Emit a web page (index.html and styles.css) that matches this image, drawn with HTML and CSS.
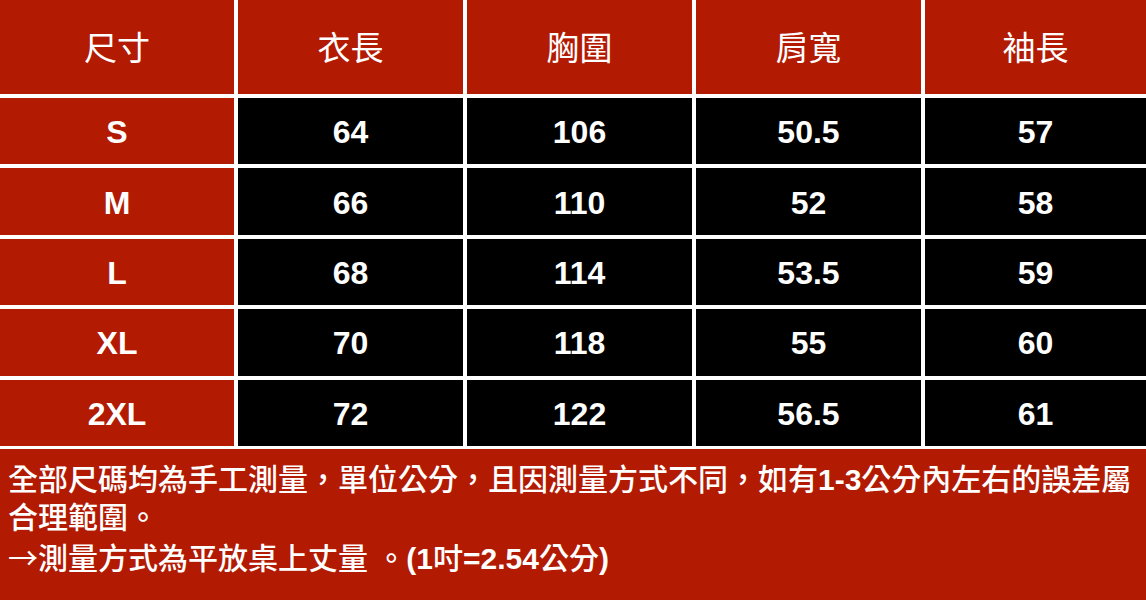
FILE: index.html
```html
<!DOCTYPE html>
<html lang="zh-Hant">
<head>
<meta charset="utf-8">
<title>尺寸表</title>
<link rel="stylesheet" href="styles.css">
</head>
<body>
<div class="sheet">
  <div class="table">
    <div class="cell head">尺寸</div>
    <div class="cell head">衣長</div>
    <div class="cell head">胸圍</div>
    <div class="cell head">肩寬</div>
    <div class="cell head">袖長</div>

    <div class="cell size">S</div>
    <div class="cell val">64</div>
    <div class="cell val">106</div>
    <div class="cell val">50.5</div>
    <div class="cell val">57</div>

    <div class="cell size">M</div>
    <div class="cell val">66</div>
    <div class="cell val">110</div>
    <div class="cell val">52</div>
    <div class="cell val">58</div>

    <div class="cell size">L</div>
    <div class="cell val">68</div>
    <div class="cell val">114</div>
    <div class="cell val">53.5</div>
    <div class="cell val">59</div>

    <div class="cell size">XL</div>
    <div class="cell val">70</div>
    <div class="cell val">118</div>
    <div class="cell val">55</div>
    <div class="cell val">60</div>

    <div class="cell size">2XL</div>
    <div class="cell val">72</div>
    <div class="cell val">122</div>
    <div class="cell val">56.5</div>
    <div class="cell val">61</div>
  </div>
  <div class="note">
    <p>全部尺碼均為手工測量，單位公分，且因測量方式不同，如有<b>1-3</b>公分內左右的誤差屬合理範圍。</p>
    <p><span class="arrow">→</span>測量方式為平放桌上丈量 。<b>(1</b>吋<b>=2.54</b>公分<b>)</b></p>
  </div>
</div>
</body>
</html>
```

FILE: styles.css
```css
html, body {
  margin: 0;
  padding: 0;
  background: #b21a02;
}

.sheet {
  width: 1146px;
  height: 600px;
  overflow: hidden;
  background: #b21a02;
  color: #ffffff;
}

.table {
  display: grid;
  grid-template-columns: 234px 225px 225px 225px 1fr;
  grid-template-rows: 94px repeat(5, 66.4px);
  gap: 4px;
  padding-bottom: 3px;
  background: #ffffff;
}

.cell {
  display: flex;
  align-items: center;
  justify-content: center;
  color: #ffffff;
}

.head {
  background: #b21a02;
  font-family: "Noto Sans CJK TC", "Noto Sans CJK SC", sans-serif;
  font-size: 33px;
  font-weight: 400;
  padding-bottom: 2px;
}

.size,
.val {
  font-family: "Liberation Sans", Arial, sans-serif;
  font-size: 32px;
  font-weight: 700;
  padding-top: 3px;
}

.size {
  background: #b21a02;
}

.val {
  background: #000000;
}

.note {
  padding: 12px 0 0 8px;
  font-family: "Liberation Sans", "Noto Sans CJK TC", "Noto Sans CJK SC", sans-serif;
  font-size: 30px;
  line-height: 38px;
  font-weight: 500;
}

.note p {
  margin: 0;
}

.note b {
  font-weight: 700;
}

.arrow {
  font-family: "Noto Sans CJK TC", "Noto Sans CJK SC", sans-serif;
  font-weight: 400;
}
```
